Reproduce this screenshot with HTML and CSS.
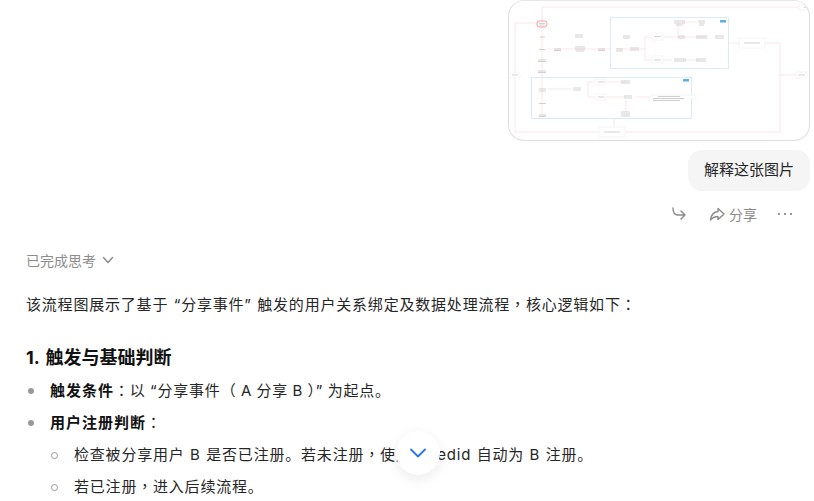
FILE: index.html
```html
<!DOCTYPE html>
<html lang="zh-CN">
<head>
    <meta charset="UTF-8">
    <meta name="viewport" content="width=device-width, initial-scale=1.0">
    <title>解释这张图片</title>
    <link rel="stylesheet" href="styles.css">
</head>
<body>
    <main class="chat">
        <section class="user-msg">
            <div class="attachment">
                <svg class="flow" viewBox="0 0 302 141" width="302" height="141" aria-hidden="true">
                    <defs>
                        <filter id="soft"><feGaussianBlur stdDeviation="0.6"/></filter>
                    </defs>
                    <g filter="url(#soft)">
                        <!-- connectors -->
                        <path class="link" d="M34 7H292M34 7V117M29 23H7V132H91M117 132H272V43H257M272 75H288M106 127V119"/>
                        <path class="link" d="M38 49H102M109 49H137M137 37V60M137 37H144M137 60H164M155 37H200M170 22V37M175 22H190M175 60H190M221 43H231"/>
                        <path class="link" d="M40 89H64M80 82V97M80 82H87M80 97H118M97 82H118M128 97H150M118 100V112"/>
                        <!-- panels -->
                        <rect class="panel" x="102.5" y="17.5" width="118" height="51"/>
                        <rect class="panel" x="23.5" y="77.5" width="160" height="41"/>
                        <rect class="tag" x="212" y="20" width="6" height="2.5"/>
                        <rect class="tag" x="175" y="79" width="6" height="2.5"/>
                        <!-- nodes -->
                        <rect class="start" x="29" y="21" width="10" height="6" rx="2.5"/>
                        <rect class="node" x="231" y="38" width="26" height="10"/>
                        <rect class="node" x="91" y="127" width="26" height="10"/>
                        <rect class="node" x="288" y="72" width="11" height="6"/>
                        <rect class="node" x="2" y="73" width="10" height="5"/>
                        <rect class="node" x="291" y="5" width="9" height="5"/>
                        <rect class="node" x="144" y="33" width="11" height="7"/>
                        <rect class="node" x="144" y="56" width="11" height="7"/>
                        <rect class="node" x="87" y="79" width="10" height="6"/>
                        <rect class="node" x="87" y="94" width="10" height="6"/>
                        <rect class="node" x="142" y="95" width="46" height="4" rx="2"/>
                        <!-- node labels -->
                        <path class="label" d="M31 23.500H37M31 25H37M32 37H37M31 49.500H37M30 60H38M30 61.500H38M30 71H38M30 72.500H38M67 35H75M67 37H75"/>
                        <path class="label" d="M46 49H53M46 50.500H53M67 47H77M67 49H77M68 51H76M90 49H97M90 50.500H97M108 49H115M108 51H115M115 36H122M115 38H122M122 48H131M122 50H131"/>
                        <path class="label" d="M146 36.500H153M146 60H153M166 21H177M166 23H177M168 25H175M190 21H197M191 23H197M191 25H196M170 36H177M170 38H177M188 36H199M188 38H199M207 36H216M207 38H216"/>
                        <path class="label" d="M166 59H178M166 61H178M188 59H198M188 61H198M236 43H252M296 7.500H298M290 75H297M4 75H10M96 132H112"/>
                        <path class="label" d="M31 89H38M31 91H38M31 103.500H38M31 115H38M31 116.500H38M65 88H73M65 90H73M90 82H96M113 81H122M113 83H122M90 97H96"/>
                        <path class="label" d="M116 96H124M116 98H124M113 112H122M113 114H122M113 116H122M150 96.500H172M145 98.500H176M145 100.500H172"/>
                    </g>
                </svg>
            </div>
            <div class="bubble">解释这张图片</div>
            <div class="msg-actions">
                <svg class="icon" viewBox="0 0 16 16" width="16" height="16">
                    <path d="M2 2c0 4 1.500 7 5 7h7M10 5l4 4-4 4"/>
                </svg>
                <span class="share">
                    <svg class="icon" viewBox="0 0 16 16" width="16" height="16">
                        <path d="M9 2.500 15 8l-6 5.500v-3c-3.500 0-5.500 1-7.500 3.500C2 9.500 4.500 6 9 5.500z"/>
                    </svg>
                    分享
                </span>
                <span class="dots"><i></i><i></i><i></i></span>
            </div>
        </section>

        <section class="reply">
            <div class="thinking">
                已完成思考
                <svg class="icon" viewBox="0 0 12 12" width="12" height="12"><path d="M1.500 3.500 6 8.500l4.500-5"/></svg>
            </div>
            <p>该流程图展示了基于 “分享事件” 触发的用户关系绑定及数据处理流程<span class="pn" lang="zh-TW">，</span>核心逻辑如下<span class="pn" lang="zh-TW">：</span></p>
            <h3>1. 触发与基础判断</h3>
            <ul>
                <li><b>触发条件</b><span class="pn" lang="zh-TW">：</span>以 “分享事件<span class="pn" lang="zh-TW">（</span> A 分享 B <span class="pn" lang="zh-TW">）</span>” 为起点。</li>
                <li><b>用户注册判断</b><span class="pn" lang="zh-TW">：</span>
                    <ul>
                        <li>检查被分享用户 B 是否已注册。若未注册<span class="pn" lang="zh-TW">，</span>使用 Seedid 自动为 B 注册。</li>
                        <li>若已注册<span class="pn" lang="zh-TW">，</span>进入后续流程。</li>
                    </ul>
                </li>
            </ul>
        </section>
    </main>

    <button class="scroll-down">
        <svg viewBox="0 0 18 12" width="18" height="12"><path d="M2 2.500 9 9.500l7-7"/></svg>
    </button>
</body>
</html>
```

FILE: styles.css
```css
/* General */
html, body { height: 100%; }
body { margin: 0; overflow: hidden; background: #fff; color: #262626; font-family: Inter, "Noto Sans CJK SC", "Liberation Sans", sans-serif; font-size: 15px; }
.chat { padding: 0 4px 0 26px; }
.icon { fill: none; stroke: #8a8a8a; stroke-width: 1.4; stroke-linecap: round; stroke-linejoin: round; }

/* User message */
.user-msg { display: flex; flex-direction: column; align-items: flex-end; }
.attachment { width: 302px; height: 141px; box-sizing: border-box; border: 1px solid #dedede; border-top-color: #e8e8e8; border-radius: 16px; overflow: hidden; }
.flow { display: block; margin: -1px; }
.link { fill: none; stroke: #fcdfe2; stroke-width: 0.8; }
.panel { fill: none; stroke: #d5e9f5; stroke-width: 0.9; }
.tag { fill: #5bb0e6; }
.start { fill: #fff; stroke: #f28d96; stroke-width: 0.9; }
.node { fill: #fff; stroke: #f0f0f0; stroke-width: 0.7; }
.label { fill: none; stroke: #bdbdbd; stroke-width: 0.7; }

.bubble { margin-top: 9px; padding: 0 16px; height: 41px; line-height: 40px; border-radius: 14px; background: #f5f5f5; }

.msg-actions { display: flex; align-items: center; height: 24px; margin-top: 11px; padding-right: 18px; color: #8a8a8a; font-size: 14px; }
.share { display: flex; align-items: center; gap: 4px; margin-left: 22px; }
.dots { display: flex; gap: 4px; margin-left: 21px; }
.dots i { width: 2px; height: 2px; border-radius: 50%; background: #777; }

/* Reply */
.reply { margin-top: 24px; letter-spacing: 0.8px; word-spacing: 0.5px; }
/* punctuation sits in the middle of its cell */
.pn { font-family: "Noto Sans CJK TC", sans-serif; line-height: 0; }
.thinking { display: flex; align-items: center; gap: 6px; height: 20px; color: #8c8c8c; font-size: 14px; letter-spacing: 0; }
.reply p { margin: 23px 0 0; line-height: 24px; }
.reply h3 { margin: 28px 0 0; font-size: 18px; line-height: 26px; color: #111; letter-spacing: 0; word-spacing: 2px; }
.reply b { color: #111; letter-spacing: 1px; }
.reply ul { margin: 0; padding: 0 0 0 24px; list-style: none; word-spacing: -0.6px; }
.reply ul ul { word-spacing: 0.5px; }
.reply li { position: relative; line-height: 32px; }
.reply li::before { content: ""; position: absolute; left: -22px; top: 13px; width: 6px; height: 6px; border-radius: 50%; background: #999; }
.reply li li::before { left: -23px; box-sizing: border-box; width: 7px; height: 7px; border: 1.5px solid #999; background: #fff; }
.reply h3 + ul { margin-top: 4px; }

/* Scroll to bottom button */
.scroll-down { position: absolute; left: 396px; top: 431px; width: 44px; height: 44px; padding: 0; border: 0; border-radius: 50%; background: #fff; box-shadow: 0 4px 14px rgba(0, 0, 0, 0.08); }
.scroll-down svg { display: block; margin: auto; fill: none; stroke: #2a72e8; stroke-width: 1.8; stroke-linecap: round; stroke-linejoin: round; }
```
